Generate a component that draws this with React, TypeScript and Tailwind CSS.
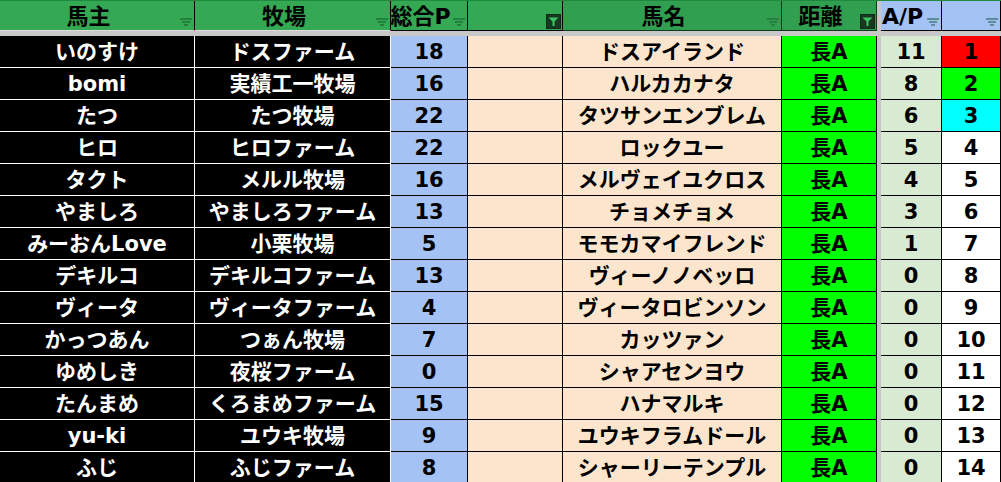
import React from "react";

const COLS = "grid grid-cols-[195px_196px_77px_95px_219px_95px_4px_61px_59px]";
const FONT = { fontFamily: '"DejaVu Sans", "Noto Sans CJK JP", sans-serif' };

type Row = [string, string, string, string, string, string, string];

const rows: Row[] = [
  ["いのすけ", "ドスファーム", "18", "ドスアイランド", "長A", "11", "1"],
  ["bomi", "実績工一牧場", "16", "ハルカカナタ", "長A", "8", "2"],
  ["たつ", "たつ牧場", "22", "タツサンエンブレム", "長A", "6", "3"],
  ["ヒロ", "ヒロファーム", "22", "ロックユー", "長A", "5", "4"],
  ["タクト", "メルル牧場", "16", "メルヴェイユクロス", "長A", "4", "5"],
  ["やましろ", "やましろファーム", "13", "チョメチョメ", "長A", "3", "6"],
  ["みーおんLove", "小栗牧場", "5", "モモカマイフレンド", "長A", "1", "7"],
  ["デキルコ", "デキルコファーム", "13", "ヴィーノノベッロ", "長A", "0", "8"],
  ["ヴィータ", "ヴィータファーム", "4", "ヴィータロビンソン", "長A", "0", "9"],
  ["かっつあん", "つぁん牧場", "7", "カッツァン", "長A", "0", "10"],
  ["ゆめしき", "夜桜ファーム", "0", "シャアセンヨウ", "長A", "0", "11"],
  ["たんまめ", "くろまめファーム", "15", "ハナマルキ", "長A", "0", "12"],
  ["yu-ki", "ユウキ牧場", "9", "ユウキフラムドール", "長A", "0", "13"],
  ["ふじ", "ふじファーム", "8", "シャーリーテンプル", "長A", "0", "14"],
];

function FilterIcon({ color }: { color: string }) {
  return (
    <div className="absolute right-[1px] top-[13px] w-[15px] h-[15px] flex items-center justify-center">
      <svg width="12" height="8" viewBox="0 0 12 8">
        <rect x="0" y="0" width="12" height="2" fill={color} />
        <rect x="2" y="3" width="8" height="2" fill={color} />
        <rect x="4" y="6" width="4" height="2" fill={color} />
      </svg>
    </div>
  );
}

function ActiveFilter() {
  return (
    <div className="absolute right-[1px] top-[13px] w-[15px] h-[15px] bg-[#17391f] border border-[#0f2a16] flex items-center justify-center">
      <svg width="11" height="11" viewBox="0 0 11 11">
        <path d="M0.5 1.5 H10.5 L6.5 5.5 V10 H4.5 V5.5 Z" fill="#3cc164" />
      </svg>
    </div>
  );
}

function HeaderCell({
  label,
  bg,
  border,
  icon,
}: {
  label: string;
  bg: string;
  border: string;
  icon: "lines" | "lines-blue" | "active" | "none";
}) {
  return (
    <div className={`relative h-[30px] border-r border-b ${bg} ${border} flex items-center justify-center pr-[17px] pt-[2px] overflow-visible`}>
      <span className="text-[22px] font-bold text-black whitespace-nowrap leading-none" style={FONT}>
        {label}
      </span>
      {icon === "lines" && <FilterIcon color="#23803f" />}
      {icon === "lines-blue" && <FilterIcon color="#5d8d9c" />}
      {icon === "active" && <ActiveFilter />}
    </div>
  );
}

function Cell({ text, cls }: { text: string; cls: string }) {
  return (
    <div className={`h-[32px] border-r border-b flex items-center justify-center pt-[1px] ${cls}`}>
      <span className="text-[21px] font-bold whitespace-nowrap leading-none" style={FONT}>
        {text}
      </span>
    </div>
  );
}

const rankBg = (i: number) =>
  i === 0 ? "bg-[#ff0000]" : i === 1 ? "bg-[#00ff00]" : i === 2 ? "bg-[#00ffff]" : "bg-white";

export default function App() {
  return (
    <div className="w-[1001px] h-[482px] overflow-hidden bg-[#c8c8c8]">
      <div className={`${COLS} border-t border-[#1f8a3f]`}>
        <HeaderCell label="馬主" bg="bg-[#34a853]" border="border-r-black border-b-[#dedede]" icon="lines" />
        <HeaderCell label="牧場" bg="bg-[#34a853]" border="border-r-black border-b-[#dedede]" icon="lines" />
        <HeaderCell label="総合P" bg="bg-[#34a853]" border="border-black" icon="lines" />
        <HeaderCell label="" bg="bg-[#34a853]" border="border-black" icon="active" />
        <HeaderCell label="馬名" bg="bg-[#30a050]" border="border-[#0f3a1c]" icon="lines" />
        <HeaderCell label="距離" bg="bg-[#30a050]" border="border-[#0f3a1c]" icon="active" />
        <div className="h-[30px] bg-[#c8c8c8]" />
        <HeaderCell label="A/P" bg="bg-[#a4c2f4]" border="border-black" icon="lines-blue" />
        <HeaderCell label="" bg="bg-[#a4c2f4]" border="border-black" icon="lines-blue" />
      </div>
      <div className="h-[5px] bg-[#c8c8c8]" />
      {rows.map((r, i) => (
        <div key={i} className={COLS}>
          <Cell text={r[0]} cls="bg-black text-white border-white" />
          <Cell text={r[1]} cls="bg-black text-white border-white" />
          <Cell text={r[2]} cls="bg-[#a4c2f4] text-black border-black" />
          <Cell text="" cls="bg-[#fce5cd] text-black border-black" />
          <Cell text={r[3]} cls="bg-[#fce5cd] text-black border-black" />
          <Cell text={r[4]} cls="bg-[#00ff00] text-black border-black" />
          <div className="h-[32px] bg-[#c8c8c8]" />
          <Cell text={r[5]} cls="bg-[#d9ead3] text-black border-black" />
          <Cell text={r[6]} cls={`${rankBg(i)} text-black border-black`} />
        </div>
      ))}
    </div>
  );
}
